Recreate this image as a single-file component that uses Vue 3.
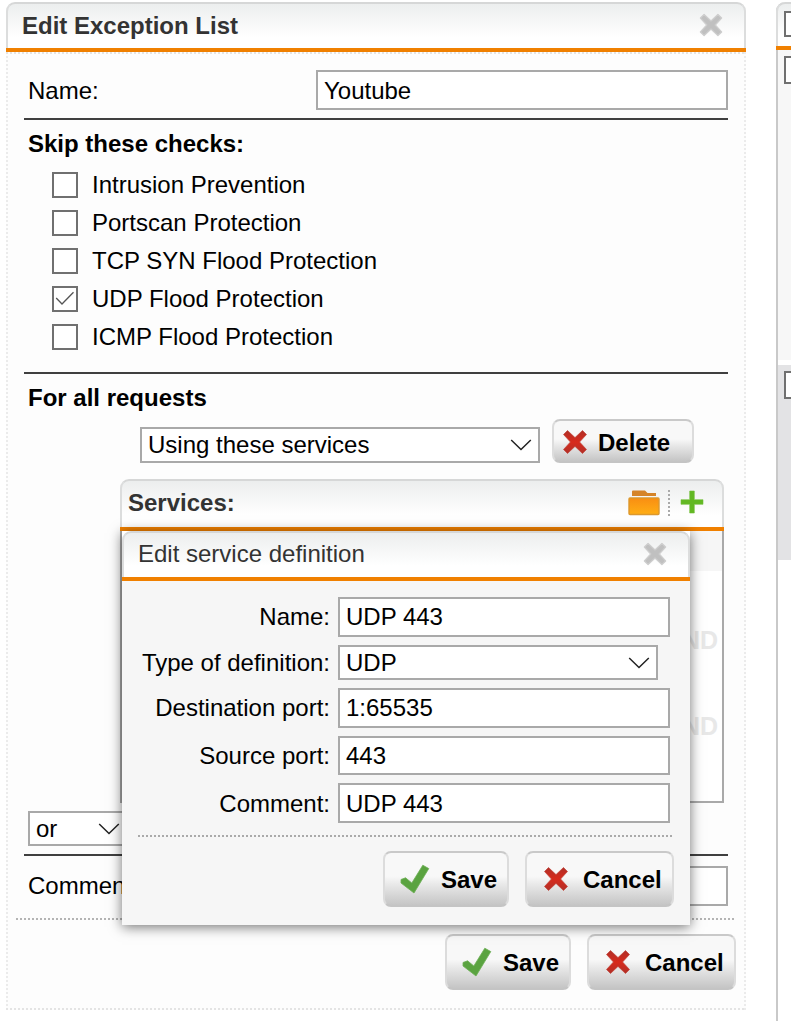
<script setup>
import { ref } from 'vue'

const checks = ref([
  { label: 'Intrusion Prevention', on: false },
  { label: 'Portscan Protection', on: false },
  { label: 'TCP SYN Flood Protection', on: false },
  { label: 'UDP Flood Protection', on: true },
  { label: 'ICMP Flood Protection', on: false },
])
const fields = [
  { label: 'Name:', value: 'UDP 443', kind: 'text', size: 'h40' },
  { label: 'Type of definition:', value: 'UDP', kind: 'select', size: 'h35' },
  { label: 'Destination port:', value: '1:65535', kind: 'text', size: 'h40' },
  { label: 'Source port:', value: '443', kind: 'text', size: 'h39' },
  { label: 'Comment:', value: 'UDP 443', kind: 'text low', size: 'h40' },
]
</script>

<template>
  <div class="page">
    <svg class="defs" width="0" height="0">
      <defs>
        <linearGradient id="redg" x1="0" y1="0" x2="0" y2="1">
          <stop offset="0" stop-color="#b03028" /><stop offset=".5" stop-color="#d82a1c" /><stop offset="1" stop-color="#b03028" />
        </linearGradient>
        <linearGradient id="folderg" x1="0" y1="0" x2="0" y2="1">
          <stop offset="0" stop-color="#f98e12" /><stop offset="1" stop-color="#ffae14" />
        </linearGradient>
        <symbol id="cross" viewBox="0 0 26 26">
          <path d="M1.5 5.5L5.5 1.5L13 8.6L20.5 1.5L24.5 5.5L17.6 13L24.5 20.5L20.5 24.5L13 17.4L5.5 24.5L1.5 20.5L8.4 13Z" stroke-linejoin="round" />
        </symbol>
        <symbol id="tick" viewBox="0 0 30 30">
          <path d="M1 15.5L5.6 13.8L11.8 19L22.8 1.2L28.8 4.6L14 29L1 19Z" fill="#5aa340" stroke="#6cae54" stroke-width=".8" />
        </symbol>
        <symbol id="chev" viewBox="0 0 22 12">
          <path d="M1.2 1L11 10.5L20.8 1" fill="none" stroke="#222" stroke-width="1.5" />
        </symbol>
      </defs>
    </svg>

    <section class="dialog">
      <header class="bar main-bar">
        <h1>Edit Exception List</h1>
        <svg class="close"><use href="#cross" /></svg>
      </header>
      <div class="body">
        <div class="name-row top">
          <span>Name:</span>
          <div class="field h40">Youtube</div>
        </div>
        <div class="rule"></div>
        <h2 class="skip">Skip these checks:</h2>
        <div class="checks">
          <div v-for="c in checks" :key="c.label" class="check">
            <span class="box">
              <svg v-if="c.on" width="22" height="22" viewBox="0 0 22 22"><path d="M2.2 10L8 16L19.5 4.2" fill="none" stroke="#555" stroke-width="1.3" /></svg>
            </span>
            <span>{{ c.label }}</span>
          </div>
        </div>
        <div class="rule"></div>
        <h2 class="requests">For all requests</h2>
        <div class="service-row">
          <div class="field select h36">Using these services<svg><use href="#chev" /></svg></div>
          <button class="btn delete"><svg class="x"><use href="#cross" /></svg><span>Delete</span></button>
        </div>

        <div class="services">
          <header class="bar services-bar">
            <h2>Services:</h2>
            <div class="tools">
              <svg width="32" height="26" viewBox="0 0 32 26">
                <path d="M4 6V1.5Q4 .5 5 .5H17L19.5 3H28V6Z" fill="#d58428" />
                <rect x="1" y="8" width="30" height="16.5" rx="1" fill="url(#folderg)" stroke="#dc982e" stroke-width="1.4" />
              </svg>
              <i class="sep"></i>
              <svg class="plus" width="24" height="24" viewBox="0 0 24 24"><path d="M9.7 1H14.3V9.7H23V14.3H14.3V23H9.7V14.3H1V9.7H9.7Z" fill="#62b822" stroke="#70be38" stroke-width=".6" /></svg>
            </div>
          </header>
          <div class="drop">
            <div class="strip"></div>
            <div class="dnd">DND</div>
            <div class="dnd">DND</div>
          </div>

          <section class="modal">
            <header class="bar modal-bar">
              <h3>Edit service definition</h3>
              <svg class="close"><use href="#cross" /></svg>
            </header>
            <div class="form">
              <div v-for="f in fields" :key="f.label" class="form-row">
                <label :class="f.kind">{{ f.label }}</label>
                <div class="field" :class="[f.size, f.kind]">{{ f.value }}<svg v-if="f.kind === 'select'"><use href="#chev" /></svg></div>
              </div>
            </div>
            <div class="dots modal-dots"></div>
            <div class="buttons modal-buttons">
              <button class="btn save"><svg class="ok"><use href="#tick" /></svg><span>Save</span></button>
              <button class="btn cancel"><svg class="x"><use href="#cross" /></svg><span>Cancel</span></button>
            </div>
          </section>
        </div>

        <div class="field select or h35">or<svg><use href="#chev" /></svg></div>
        <div class="rule"></div>
        <div class="name-row comment">
          <span>Comment:</span>
          <div class="field h40"></div>
        </div>
        <div class="dots"></div>
        <div class="buttons">
          <button class="btn save"><svg class="ok"><use href="#tick" /></svg><span>Save</span></button>
          <button class="btn cancel"><svg class="x"><use href="#cross" /></svg><span>Cancel</span></button>
        </div>
      </div>
    </section>

    <aside class="list">
      <header class="bar list-bar"><span class="box"></span></header>
      <div class="item first"><span class="box big"></span></div>
      <div class="item second"><span class="box big"></span></div>
    </aside>
  </div>
</template>

<style>
body { background: #fff; overflow: hidden; }
</style>

<style scoped>
* { box-sizing: border-box; }
.page {
  width: 791px; height: 1021px; padding: 2px 0 0 6px; overflow: hidden;
  display: flex; gap: 30px; align-items: flex-start;
  font: 24px/28px "Liberation Sans", Arial, sans-serif; color: #000;
}
.defs { position: absolute; }
h1, h2, h3 { margin: 0; font-size: 24px; line-height: 28px; }
h3 { font-weight: 400; }
svg { display: block; flex: none; }
.dialog { width: 740px; flex: none; }
.bar {
  display: flex; align-items: center; justify-content: space-between;
  border: 2px solid #dcdddd; border-top-color: #d6d7d7; border-bottom: 0; border-radius: 9px 9px 0 0;
  background: linear-gradient(#eceeee, #fff 75%);
  color: #333; position: relative;
}
.bar::after {
  content: ""; position: absolute; left: -2px; right: -2px; bottom: -4px; height: 4px; background: #f08000;
}
.main-bar { height: 46px; padding: 0 21px 0 14px; }
.close { width: 24px; height: 24px; fill: #c0c0c0; stroke: #cecece; stroke-width: 1.4; }
.main-bar .close { margin-bottom: 3px; }
.body {
  margin-top: 4px; height: 958px; padding: 18px 18px 0;
  background:
    repeating-linear-gradient(90deg, #e4e4e4 0 2px, transparent 2px 4px) 0 0 / 100% 2px no-repeat,
    repeating-linear-gradient(90deg, #e4e4e4 0 2px, transparent 2px 4px) 0 100% / 100% 2px no-repeat,
    repeating-linear-gradient(#ebebeb 0 2px, transparent 2px 4px) 0 0 / 2px 100% no-repeat,
    repeating-linear-gradient(#ebebeb 0 2px, transparent 2px 4px) 100% 0 / 2px 100% no-repeat,
    #fdfdfd;
}
.name-row { display: flex; align-items: center; justify-content: space-between; padding-left: 4px; }
.name-row .field { width: 412px; }
.top span { padding-top: 2px; }
.field {
  border: 2px solid #a9a9a9; background: #fff; padding: 0 6px;
  display: flex; align-items: center; white-space: nowrap; color: #000;
}
.top .field, .low { padding-top: 2px; }
.h40 { height: 40px; }
.h39 { height: 39px; }
.h36 { height: 36px; }
.h35 { height: 35px; }
.select { justify-content: space-between; }
.select svg { width: 22px; height: 12px; }
.rule { height: 2px; background: #404040; margin-top: 8px; width: 704px; }
.skip { margin: 10px 0 0 4px; }
.checks { margin: 8px 0 0 28px; }
.check { display: flex; align-items: center; gap: 14px; height: 38px; }
.box { width: 26px; height: 26px; border: 2px solid #707070; background: #fff; display: block; flex: none; }
.checks + .rule { margin-top: 16px; }
.requests { margin: 10px 0 0 4px; }
.service-row { display: flex; gap: 12px; margin: 7px 0 0 116px; align-items: flex-end; }
.service-row .select { width: 400px; }
.btn {
  border: 2px solid #dcdcdc; border-top-color: #c9c9c9; border-bottom-color: #c4c4c4; border-radius: 8px;
  background: linear-gradient(#f8f8f8 45%, #e9e9e9 60%, #c5c5c5);
  font: bold 24px/28px "Liberation Sans", Arial, sans-serif; color: #000; padding: 0;
  display: flex; align-items: center; flex: none;
}
.btn .x { width: 26px; height: 26px; fill: url(#redg); stroke: #c0453b; stroke-width: .7; }
.btn .ok { width: 30px; height: 30px; }
.delete { width: 142px; height: 44px; padding: 2px 0 0 8px; gap: 10px; }
.delete span { padding-top: 2px; }
.save { width: 126px; height: 56px; padding: 2px 0 0 15px; gap: 11px; }
.cancel { width: 149px; height: 56px; padding: 2px 0 0 16px; gap: 14px; }
.save .ok { margin-bottom: 3px; }
.cancel .x { margin-bottom: 2px; }
.services { position: relative; width: 604px; margin: 16px 0 0 96px; }
.services-bar { height: 48px; padding: 0 18px 0 6px; }
.services-bar h2, .modal-bar h3 { margin-bottom: 2px; }
.tools { display: flex; align-items: center; margin-bottom: 3px; }
.plus { margin-bottom: 2px; }
.sep { height: 26px; margin: 0 10px 0 8px; border-left: 2px dotted #aaa; }
.drop {
  margin-top: 4px; height: 272px; border: 2px solid #a9a9a9; border-top: 0; background: #fff;
}
.strip { height: 40px; background: #f6f6f6; }
.dnd { text-align: right; padding-right: 4px; font: bold 25px/30px "Liberation Sans", Arial, sans-serif; color: #e8e8e8; margin-top: 56px; }
.strip + .dnd { margin-top: 54px; }
.modal {
  position: absolute; left: 2px; top: 52px; width: 568px; height: 394px; z-index: 2;
  background: #f6f6f6; box-shadow: 0 2px 12px rgba(0, 0, 0, .55);
}
.modal-bar { height: 46px; padding: 0 21px 0 14px; }
.modal-bar .close { margin-bottom: 3px; }
.modal-bar::before { content: ""; position: absolute; inset: -2px; background: #fff; z-index: -1; }
.form { padding-top: 20px; display: flex; flex-direction: column; gap: 8px; }
.form-row { display: flex; align-items: center; gap: 8px; }
.form-row label { width: 208px; text-align: right; }
.form-row .field { width: 332px; }
.form-row .field.select { width: 320px; }
.dots { height: 2px; width: 720px; margin: 12px 0 0 -8px; background: repeating-linear-gradient(90deg, #b4b4b4 0 2px, transparent 2px 4px); }
.modal-dots { width: 536px; margin: 12px 0 0 16px; background: repeating-linear-gradient(90deg, #aaa 0 2px, transparent 2px 4px); }
.buttons { display: flex; justify-content: flex-end; gap: 16px; margin: 14px -8px 0 0; }
.modal-buttons { margin: 14px 16px 0 0; }
.or { width: 104px; margin: 8px 0 0 4px; padding-right: 10px; }
.comment { margin-top: 10px; }
.list { flex: none; width: 200px; height: 1019px; border-left: 2px solid #c9c9c9; border-radius: 9px 0 0 0; }
.list-bar { height: 44px; padding: 0 0 2px 6px; margin-left: -2px; justify-content: flex-start; }
.item { padding: 6px; }
.first { margin-top: 4px; height: 310px; background: #f7f7f7; }
.second { margin-top: 5px; height: 195px; background: #e3e3e5; }
.big { width: 28px; height: 28px; }
</style>
